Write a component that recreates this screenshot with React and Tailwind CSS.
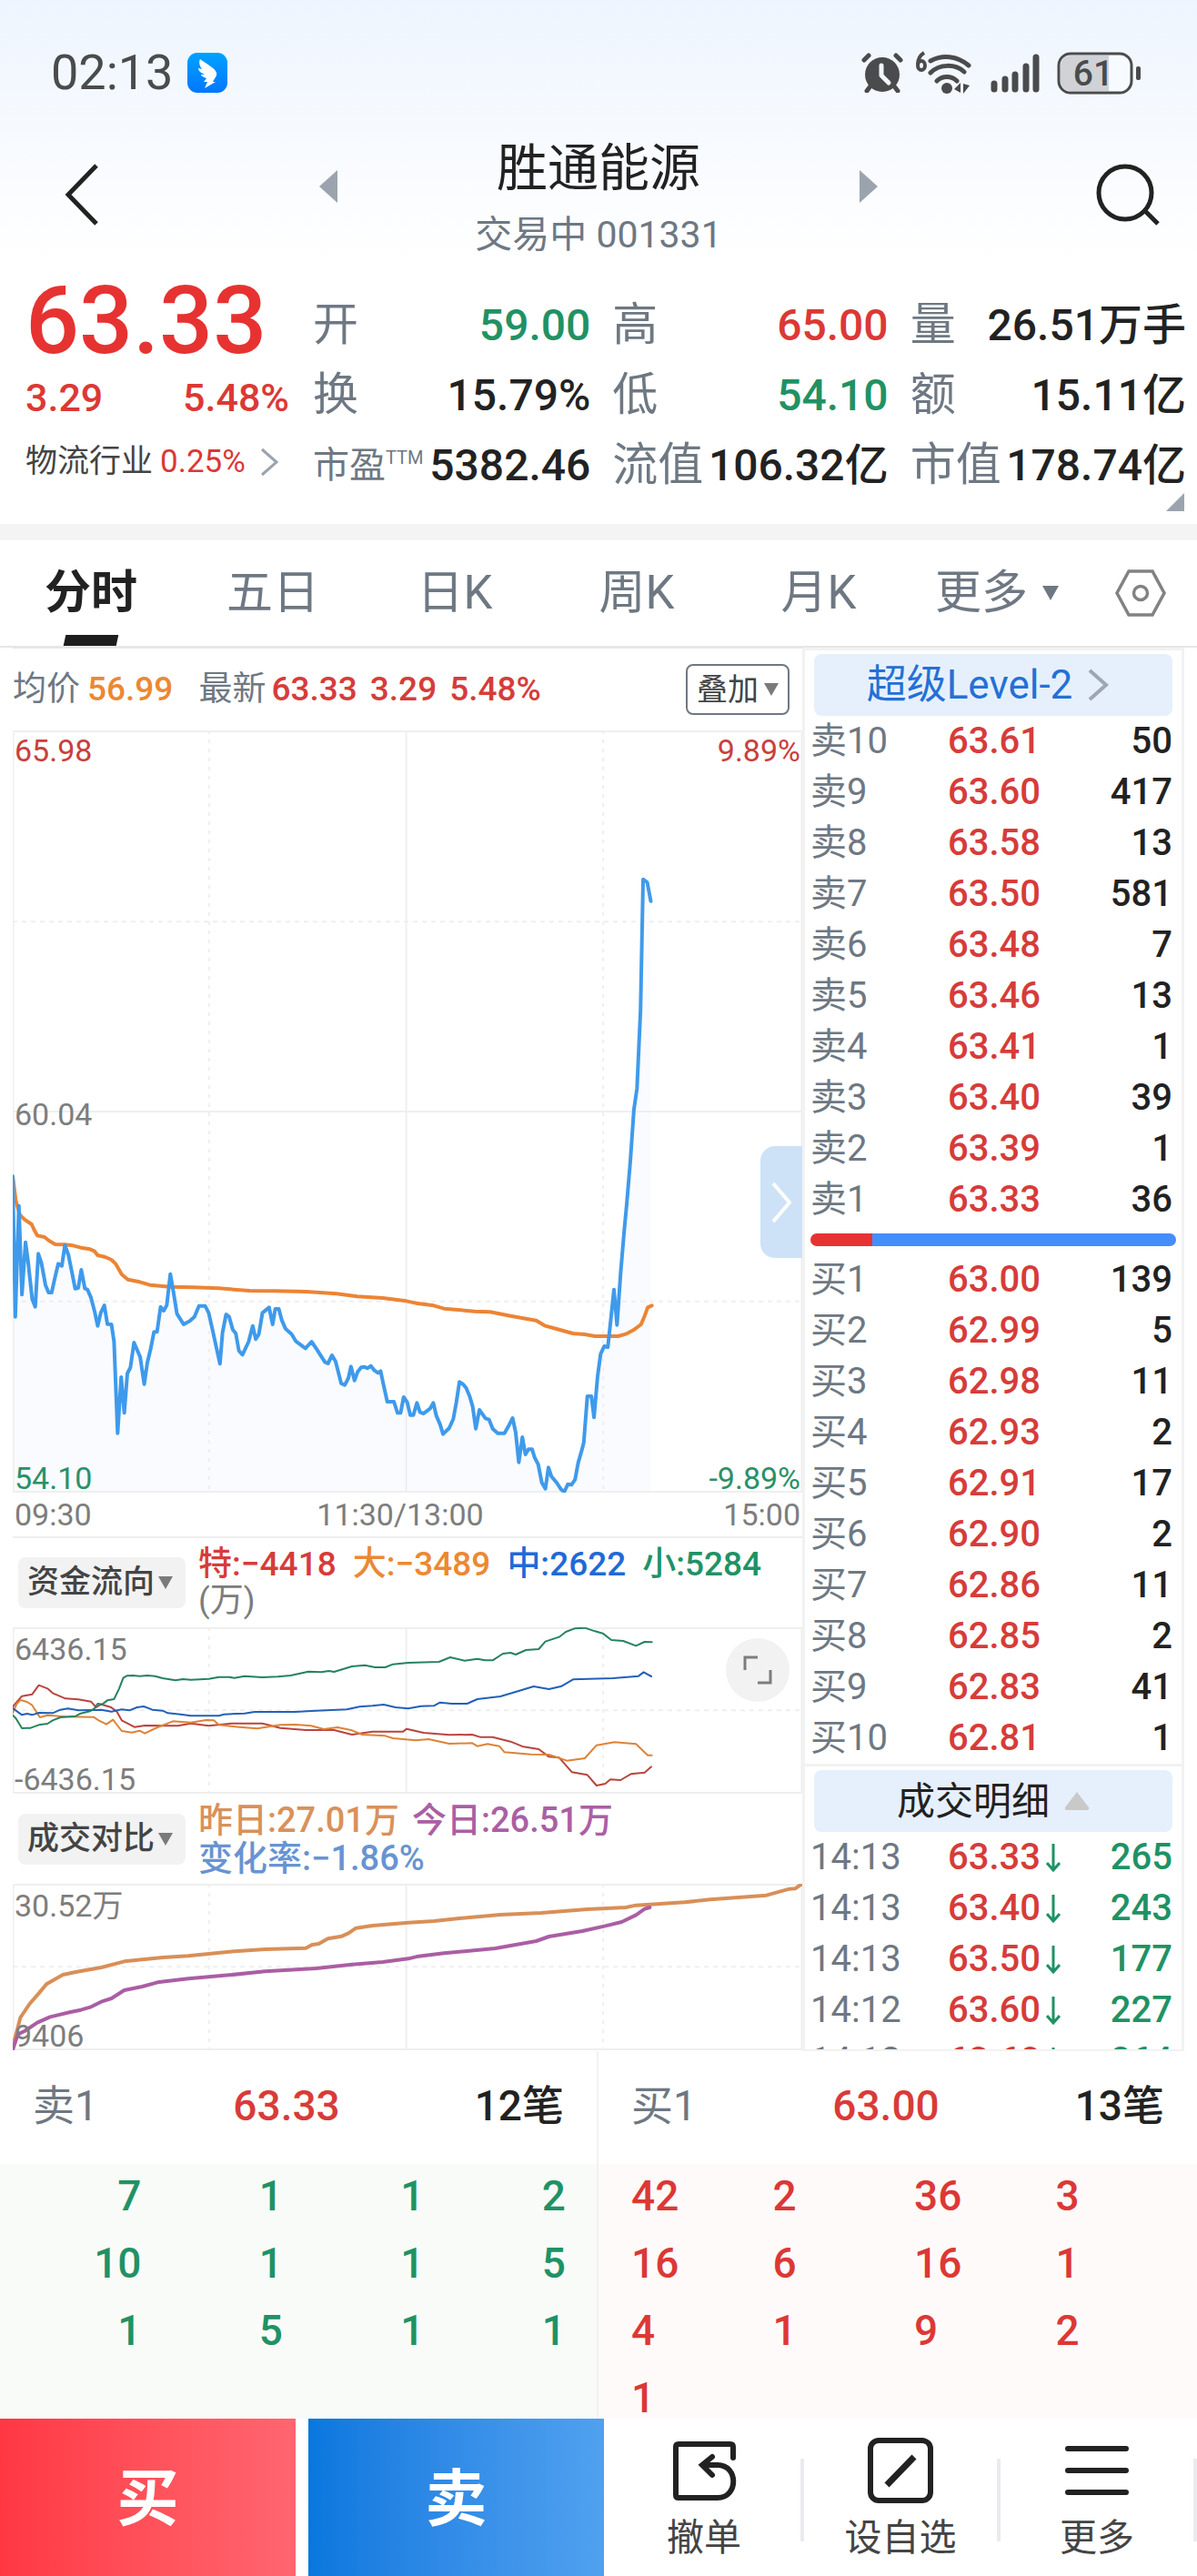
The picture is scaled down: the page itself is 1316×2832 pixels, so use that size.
import React, { useState } from 'react';

const quoteColumns = [
  [
    { label: '开', value: '59.00', tone: 'text-[#1f9265]' },
    { label: '换', value: '15.79%', tone: 'text-[#222]' },
    { label: '市盈', note: 'TTM', value: '5382.46', tone: 'text-[#222]' },
  ],
  [
    { label: '高', value: '65.00', tone: 'text-[#dc3835]' },
    { label: '低', value: '54.10', tone: 'text-[#1f9265]' },
    { label: '流值', value: '106.32亿', tone: 'text-[#222]' },
  ],
  [
    { label: '量', value: '26.51万手', tone: 'text-[#222]' },
    { label: '额', value: '15.11亿', tone: 'text-[#222]' },
    { label: '市值', value: '178.74亿', tone: 'text-[#222]' },
  ],
];

const tabs = ['分时', '五日', '日K', '周K', '月K'];

const asks = [
  ['卖10', '63.61', 50],
  ['卖9', '63.60', 417],
  ['卖8', '63.58', 13],
  ['卖7', '63.50', 581],
  ['卖6', '63.48', 7],
  ['卖5', '63.46', 13],
  ['卖4', '63.41', 1],
  ['卖3', '63.40', 39],
  ['卖2', '63.39', 1],
  ['卖1', '63.33', 36],
];

const bids = [
  ['买1', '63.00', 139],
  ['买2', '62.99', 5],
  ['买3', '62.98', 11],
  ['买4', '62.93', 2],
  ['买5', '62.91', 17],
  ['买6', '62.90', 2],
  ['买7', '62.86', 11],
  ['买8', '62.85', 2],
  ['买9', '62.83', 41],
  ['买10', '62.81', 1],
];

const trades = [
  ['14:13', '63.33', 265],
  ['14:13', '63.40', 243],
  ['14:13', '63.50', 177],
  ['14:12', '63.60', 227],
  ['14:12', '63.60', 264],
];

const sellQueue = [
  [7, 1, 1, 2],
  [10, 1, 1, 5],
  [1, 5, 1, 1],
];

const buyQueue = [
  [42, 2, 36, 3],
  [16, 6, 16, 1],
  [4, 1, 9, 2],
  [1, '', '', ''],
];

// Chart series, in viewBox units
const pricePoints =
  '27,220 32,683 39,317 45,610 52,437 57,500 65,625 71,650 77,475 83,505 91,578 97,603 103,603 110,550 116,508 123,515 129,447 136,480 149,590 155,588 161,528 168,590 173,593 180,620 187,665 193,713 199,670 206,645 212,707 220,708 225,765 232,1067 239,882 245,1000 251,870 257,850 264,768 276,815 284,905 290,835 297,785 303,733 309,733 316,650 322,663 328,645 335,542 341,600 348,673 361,708 373,697 382,683 391,647 403,647 410,670 418,730 432,838 437,735 444,675 450,683 457,725 463,738 469,795 476,808 488,765 496,713 502,757 508,740 515,670 528,652 535,708 540,657 547,657 553,695 560,722 572,740 580,763 599,787 611,765 620,787 637,832 643,837 651,810 658,830 669,903 676,908 683,885 688,847 695,893 701,865 708,850 715,848 720,853 727,845 734,860 741,868 746,862 752,910 759,963 772,963 779,1000 785,1000 791,948 798,965 804,1007 810,1007 817,967 823,998 830,1002 843,985 849,967 855,1010 862,1037 868,1070 880,1050 888,1020 894,965 900,898 907,905 913,917 920,945 926,980 932,1052 939,990 951,1018 958,1022 965,1052 975,1067 988,1067 997,1040 1004,1017 1010,1065 1016,1163 1023,1080 1029,1137 1035,1120 1042,1120 1047,1147 1054,1170 1061,1230 1068,1250 1074,1180 1080,1210 1090,1230 1099,1253 1105,1260 1112,1235 1119,1237 1126,1220 1132,1165 1138,1130 1143,1098 1150,945 1158,945 1163,1015 1170,880 1176,805 1183,780 1190,783 1196,690 1202,593 1208,710 1215,540 1222,400 1227,310 1234,170 1241,0 1247,-70 1254,-330 1259,-760 1267,-750 1274,-688';
const averagePoints =
  '27,220 33,300 41,347 50,362 64,378 70,400 75,415 89,420 98,432 110,444 129,445 145,448 160,455 178,460 187,467 193,480 208,486 220,495 228,508 240,543 252,560 275,568 295,578 335,584 380,586 430,589 490,597 540,598 600,600 660,607 700,616 750,621 796,631 815,638 850,646 870,656 930,665 960,667 1000,680 1050,695 1068,713 1090,723 1122,738 1145,741 1165,747 1210,747 1225,740 1240,727 1255,708 1262,680 1268,652 1276,646';

const fundSeries = [
  {
    color: '#b8453f',
    points:
      '27,620 45,585 65,579 78,549 95,560 105,575 130,593 155,596 180,603 190,622 200,612 218,621 230,635 240,665 265,687 285,682 350,683 375,675 410,683 455,675 515,675 550,690 600,697 655,697 690,712 730,702 790,702 797,693 830,706 880,713 925,712 940,720 965,720 1000,735 1025,752 1055,760 1075,785 1095,788 1120,836 1150,845 1168,880 1185,874 1195,860 1215,862 1235,842 1262,837 1275,818',
  },
  {
    color: '#de8336',
    points:
      '27,640 35,610 42,598 55,604 65,615 80,655 95,648 130,653 185,654 195,665 210,678 223,663 240,700 260,705 275,699 285,708 310,688 340,668 375,672 405,664 420,665 430,680 470,687 505,692 550,680 580,679 610,683 635,694 662,688 690,698 710,712 755,716 770,724 815,731 840,727 880,742 925,740 935,750 955,743 978,750 988,770 1040,777 1075,778 1110,798 1145,790 1168,747 1203,737 1245,743 1268,780 1276,780',
  },
  {
    color: '#2360b8',
    points:
      '27,625 45,647 55,643 65,647 78,640 105,641 120,630 135,626 155,632 185,631 200,630 220,636 240,629 255,632 270,622 283,619 300,630 320,633 330,641 355,645 375,650 430,650 440,645 480,642 500,637 580,637 610,634 680,629 705,620 730,617 752,613 775,622 800,626 825,618 850,617 862,606 885,610 915,610 935,595 980,586 1010,571 1045,553 1075,562 1100,552 1122,530 1200,526 1250,519 1260,506 1275,520',
  },
  {
    color: '#25835f',
    points:
      '27,648 33,658 45,691 55,690 62,690 78,680 95,676 105,665 120,655 150,651 160,642 178,635 187,625 193,610 202,612 212,599 225,595 235,560 243,525 250,518 262,517 275,519 290,517 305,519 320,526 345,533 360,529 375,531 410,528 430,522 450,522 460,525 480,519 515,523 545,521 570,517 605,504 630,506 645,502 655,505 690,487 715,483 735,490 755,490 770,480 800,475 860,472 882,457 910,468 935,462 950,467 965,467 985,445 1000,442 1010,448 1030,433 1055,430 1068,405 1095,390 1108,373 1125,362 1145,360 1165,371 1180,378 1197,400 1220,403 1245,419 1262,406 1276,407',
  },
];

const volumeSeries = [
  {
    color: '#d98f57',
    points:
      '27,840 35,790 42,745 60,700 78,665 93,635 125,604 150,595 200,580 245,560 320,547 370,542 450,528 520,520 600,516 612,505 625,502 643,485 670,477 683,467 698,450 730,442 800,432 850,427 900,418 980,406 1060,400 1150,388 1225,382 1245,375 1340,365 1390,356 1500,342 1545,321 1556,320 1566,308 1570,306',
  },
  {
    color: '#aa5ea3',
    points:
      '27,852 37,800 50,790 75,762 100,743 140,727 160,720 180,710 200,693 220,682 245,655 280,643 310,629 370,617 450,605 520,593 620,583 690,570 750,562 800,551 820,543 870,533 970,517 1050,493 1075,478 1140,460 1185,443 1217,430 1245,407 1262,387 1272,382',
  },
];

const Line = ({ points, color, width }) => (
  <polyline
    points={points}
    fill="none"
    stroke={color}
    strokeWidth={width}
    strokeLinejoin="round"
    strokeLinecap="round"
    vectorEffect="non-scaling-stroke"
  />
);

// Frame plus quarter lines. Solid in the middle, dashed elsewhere.
const ChartGrid = ({ top, height, rows }) => {
  const bottom = top + height;
  return (
    <g stroke="#efefef" strokeWidth="2">
      {[28, 796, 1569].map((x) => (
        <line key={x} x1={x} x2={x} y1={top} y2={bottom} vectorEffect="non-scaling-stroke" />
      ))}
      {[411, 1181].map((x) => (
        <line key={x} x1={x} x2={x} y1={top} y2={bottom} strokeDasharray="4 6" vectorEffect="non-scaling-stroke" />
      ))}
      {rows.map(([y, dashed]) => (
        <line key={y} x1="27" x2="1570" y1={y} y2={y} strokeDasharray={dashed ? '5 5' : undefined} vectorEffect="non-scaling-stroke" />
      ))}
    </g>
  );
};

const StatusBar = () => (
  <div className="flex h-12 items-center justify-between pl-14 pr-[62px] text-[#4a4b4c]">
    <div className="flex items-center gap-4">
      <span className="text-[54px] leading-12">02:13</span>
      <svg className="h-11 w-11" viewBox="0 0 44 44">
        <defs>
          <linearGradient id="wing" x1="0" y1="0" x2="0" y2="1">
            <stop offset="0" stopColor="#00a2ff" />
            <stop offset="1" stopColor="#0077ff" />
          </linearGradient>
        </defs>
        <rect width="44" height="44" rx="11" fill="url(#wing)" />
        <path d="M14 7c6 5 16 9 18 15 1 3-2 6-4 10h3L19 39l3-7h-4l3-4c-4-1-6-3-6-4l4 0c-4-2-7-4-7-7l4 1c-2-3-4-7-2-11z" fill="#fff" />
      </svg>
    </div>
    <div className="flex items-center">
      <svg className="h-11 w-12" viewBox="0 0 48 44" fill="none" stroke="currentColor" strokeLinecap="round">
        <circle cx="24" cy="24" r="19" fill="currentColor" stroke="none" />
        <path d="M4 8l5-5M44 8l-5-5M10 38l-3 4M38 38l3 4" strokeWidth="5" />
        <path d="M23 14v11l8 8" stroke="#f2f6fd" strokeWidth="5" strokeLinejoin="round" />
      </svg>
      <svg className="ml-3 h-12 w-[62px]" viewBox="0 0 62 48" fill="none" stroke="currentColor" strokeWidth="5">
        <path d="M10 2C5 5 3 9 3 15" strokeWidth="4" />
        <ellipse cx="7" cy="16" rx="4" ry="5" strokeWidth="4" />
        <path d="M17 11c13-7 29-6 42 5M17 24c10-10 27-10 37-1M24 33c6-6 16-6 22 0" strokeLinecap="round" />
        <circle cx="35" cy="41" r="6" fill="currentColor" stroke="none" />
        <path d="M43 42l7-7v11zM53 36v11l7-9z" fill="currentColor" stroke="none" />
      </svg>
      <svg className="ml-5 h-12 w-[58px]" viewBox="0 0 58 48" stroke="currentColor" strokeWidth="7" strokeLinecap="round">
        <path d="M5 36v6M17 31v11M28 26v16M40 17v25M51 7v35" />
      </svg>
      <svg className="ml-4 h-12 w-[92px]" viewBox="0 0 92 48">
        <rect x="2" y="3" width="80" height="43" rx="13" fill="#f7fafe" stroke="currentColor" strokeWidth="3" />
        <path d="M15 5h42v39H15A11 11 0 0 1 4 33V16A11 11 0 0 1 15 5z" fill="#d0d2d5" />
        <rect x="87" y="17" width="5" height="15" rx="2" fill="currentColor" />
        <text x="40" y="38" textAnchor="middle" fontSize="39" fontWeight="500" fill="currentColor">61</text>
      </svg>
    </div>
  </div>
);

const TitleBar = () => (
  <div className="mt-[45px] grid grid-cols-[1fr_614px_1fr] items-center">
    <button aria-label="返回" className="mb-2 ml-[72px] justify-self-start">
      <svg className="h-[68px] w-9" viewBox="0 0 36 68" fill="none" stroke="#222" strokeWidth="5">
        <path d="M34 2L3 34l31 32" />
      </svg>
    </button>
    <div className="flex items-start justify-between">
      <button aria-label="上一只" className="flex h-28 items-center">
        <svg className="h-9 w-5" viewBox="0 0 20 36"><path d="M20 0v36L0 18z" fill="#9ba4ae" /></svg>
      </button>
      <div className="text-center">
        <h1 className="text-[56px] leading-[72px] text-[#222]">胜通能源</h1>
        <p className="mt-2 text-[41px] leading-[58px] text-[#6e7883]">交易中 001331</p>
      </div>
      <button aria-label="下一只" className="flex h-28 items-center">
        <svg className="h-9 w-5" viewBox="0 0 20 36"><path d="M0 0v36l20-18z" fill="#9ba4ae" /></svg>
      </button>
    </div>
    <button aria-label="搜索" className="mb-2 mr-10 justify-self-end">
      <svg className="h-[70px] w-[72px]" viewBox="0 0 72 70" fill="none" stroke="#222" strokeWidth="5">
        <circle cx="33" cy="33" r="29" />
        <path d="M55 53l14 14" />
      </svg>
    </button>
  </div>
);

const QuoteSummary = () => (
  <div className="relative flex gap-[26px] pb-[26px] pl-7 pr-3 pt-6">
    <div className="w-[290px] shrink-0 text-[#dc3835]">
      <div className="text-[104px] font-medium leading-[84px] text-[#e63331]">63.33</div>
      <div className="flex justify-between text-[43px] font-medium leading-[84px]">
        <span>3.29</span>
        <span>5.48%</span>
      </div>
      <a href="#industry" className="flex items-center text-[35px] leading-[58px]">
        <span className="text-[#444]">物流行业</span>
        <span className="ml-2">0.25%</span>
        <svg className="ml-4 h-8 w-5" viewBox="0 0 20 32" fill="none" stroke="#9ba4ae" strokeWidth="3">
          <path d="M2 2l16 14L2 30" />
        </svg>
      </a>
    </div>
    <div className="mt-2 grid flex-1 grid-cols-[306fr_304fr_304fr] gap-6 leading-[77px]">
      {quoteColumns.map((column, index) => (
        <dl key={index}>
          {column.map((item) => (
            <div key={item.label} className="flex justify-between whitespace-nowrap">
              {item.note ? (
                <dt className="flex text-[40px] text-[#6e7883]">
                  {item.label}
                  <span className="text-[20px] leading-[60px]">{item.note}</span>
                </dt>
              ) : (
                <dt className="text-[50px] text-[#6e7883]">{item.label}</dt>
              )}
              <dd className={`text-[48px] font-medium ${item.tone}`}>{item.value}</dd>
            </div>
          ))}
        </dl>
      ))}
    </div>
    <svg className="absolute bottom-3.5 right-3.5 h-5 w-5" viewBox="0 0 20 20"><path d="M20 0v20H0z" fill="#9ba4ae" /></svg>
  </div>
);

const PeriodTabs = ({ active, setActive }) => (
  <div className="flex h-[118px] border-b-2 border-[#e6e6e6] text-[51px] text-[#6e7883]">
    {tabs.map((tab) => (
      <button
        key={tab}
        onClick={() => setActive(tab)}
        className={tab === active ? 'relative flex-[200] font-bold text-[#222]' : 'relative flex-[200]'}
      >
        {tab}
        {tab === active && (
          <span className="absolute bottom-0 left-1/2 h-3 w-[58px] -translate-x-1/2 -skew-x-12 bg-[#1d1d1d]" />
        )}
      </button>
    ))}
    <button className="flex flex-[192] items-center justify-center gap-4">
      更多
      <svg className="h-4 w-[18px]" viewBox="0 0 18 16"><path d="M0 0h18L9 16z" fill="#6e7883" /></svg>
    </button>
    <button aria-label="设置" className="flex flex-[124] items-center justify-center">
      <svg className="h-[52px] w-14" viewBox="0 0 56 52" fill="none" stroke="#828282" strokeWidth="3.500">
        <path d="M15 2h26l13 24-13 24H15L2 26z" />
        <circle cx="28" cy="26" r="7.500" />
      </svg>
    </button>
  </div>
);

const DownArrow = () => (
  <svg className="h-3.5 w-4" viewBox="0 0 16 14"><path d="M0 0h16L8 14z" fill="#7a7a7a" /></svg>
);

const IndicatorButton = ({ children }) => (
  <button className="flex h-14 w-[184px] shrink-0 items-center justify-center gap-1 rounded-lg bg-[#f2f2f2] pr-1 text-[35px] text-[#444]">
    {children}
    <DownArrow />
  </button>
);

const ChartColumn = () => (
  <div className="min-w-0 flex-1 pl-3.5">
    <div className="flex h-[91px] items-center border-t border-[#e6e6e6] pr-3.5 text-[37px] text-[#d63c3a]">
      <span className="text-[#6e7883]">均价</span>
      <span className="ml-2 font-medium text-[#ec8833]">56.99</span>
      <span className="ml-7 text-[#6e7883]">最新</span>
      <span className="ml-1.5 font-medium">63.33</span>
      <span className="ml-3.5 font-medium">3.29</span>
      <span className="ml-3.5 font-medium">5.48%</span>
      <button className="ml-auto flex h-14 w-[114px] items-center justify-center gap-1.5 rounded-lg border-2 border-[#6e7883] text-[34px] text-[#444]">
        叠加
        <DownArrow />
      </button>
    </div>

    <div className="relative text-[34px] leading-10">
      <svg className="h-[838px] w-full" viewBox="27 -1251 1543 2514" preserveAspectRatio="none">
        <polygon points={`27,1263 ${pricePoints} 1274,1263`} fill="#f9fbff" />
        <ChartGrid top={-1251} height={2514} rows={[[-1248, false], [-620, true], [6, false], [632, true], [1260, false]]} />
        <Line points={averagePoints} color="#ec8435" width="4" />
        <Line points={pricePoints} color="#3f9aeb" width="4" />
      </svg>
      <span className="absolute left-0.5 top-0.5 text-[#c8403d]">65.98</span>
      <span className="absolute right-0.5 top-0.5 text-[#c8403d]">9.89%</span>
      <span className="absolute left-0.5 top-[402px] text-[#7d7d7d]">60.04</span>
      <span className="absolute -bottom-1 left-0.5 text-[#2a9068]">54.10</span>
      <span className="absolute -bottom-1 right-0.5 text-[#2a9068]">-9.89%</span>
      <button aria-label="收起盘口" className="absolute right-0 top-[457px] flex h-[123px] w-[46px] items-center justify-center rounded-l-2xl bg-[#cde2f7]">
        <svg className="h-12 w-6" viewBox="0 0 24 48" fill="none" stroke="#fff" strokeWidth="4">
          <path d="M3 3l18 21L3 45" />
        </svg>
      </button>
    </div>
    <div className="flex h-[50px] items-center justify-between border-b-2 border-[#eee] px-0.5 text-[34px] text-[#7d7d7d]">
      <span>09:30</span>
      <span className="pr-4">11:30/13:00</span>
      <span>15:00</span>
    </div>

    <div className="flex h-[98px] items-center gap-3.5 pl-1.5 text-[37px] font-medium leading-10">
      <IndicatorButton>资金流向</IndicatorButton>
      <p className="flex flex-wrap gap-x-[18px] whitespace-nowrap">
        <span className="text-[#d63c3a]">特:−4418</span>
        <span className="text-[#ec8833]">大:−3489</span>
        <span className="text-[#1f6ad6]">中:2622</span>
        <span className="text-[#1f9265]">小:5284</span>
        <span className="basis-full font-normal text-[#7d7d7d]">(万)</span>
      </p>
    </div>
    <div className="relative text-[34px] leading-10 text-[#7d7d7d]">
      <svg className="h-[183px] w-full" viewBox="27 358 1543 549" preserveAspectRatio="none">
        <ChartGrid top={358} height={549} rows={[[361, false], [632, true], [904, false]]} />
        {fundSeries.map((s) => (
          <Line key={s.color} points={s.points} color={s.color} width="2" />
        ))}
      </svg>
      <span className="absolute left-0.5 top-1">6436.15</span>
      <span className="absolute -bottom-1 left-0.5">-6436.15</span>
      <button aria-label="全屏" className="absolute right-3.5 top-3 flex h-[70px] w-[70px] items-center justify-center rounded-full bg-[#f2f2f2]">
        <svg className="h-8 w-8" viewBox="0 0 32 32" fill="none" stroke="#7d7d7d" strokeWidth="3">
          <path d="M2 16V2h14M30 16v14H16" />
        </svg>
      </button>
    </div>

    <div className="flex h-[99px] items-center gap-3.5 pl-1.5 text-[38px] font-medium leading-[42px]">
      <IndicatorButton>成交对比</IndicatorButton>
      <p className="flex flex-wrap gap-x-3.5 whitespace-nowrap">
        <span className="text-[#d9915a]">昨日:27.01万</span>
        <span className="text-[#ab5fa4]">今日:26.51万</span>
        <span className="basis-full text-[#6893d2]">变化率:−1.86%</span>
      </p>
    </div>
    <div className="relative text-[34px] leading-10 text-[#7d7d7d]">
      <svg className="h-[183px] w-full" viewBox="27 304 1543 549" preserveAspectRatio="none">
        <ChartGrid top={304} height={549} rows={[[307, false], [578, true], [850, false]]} />
        {volumeSeries.map((s) => (
          <Line key={s.color} points={s.points} color={s.color} width="4" />
        ))}
      </svg>
      <span className="absolute left-0.5 top-1">30.52万</span>
      <span className="absolute -bottom-1 left-0.5">9406</span>
    </div>
  </div>
);

const DepthTable = ({ label, rows }) => (
  <table aria-label={label} className="w-full table-fixed text-[40px] leading-[56px]">
    <tbody>
      {rows.map(([name, price, amount]) => (
        <tr key={name}>
          <td className="w-[151px] p-0 text-[#6e7883]">{name}</td>
          <td className="p-0 font-medium text-[#d63c3a]">{price}</td>
          <td className="w-[120px] p-0 text-right font-medium text-[#222]">{amount}</td>
        </tr>
      ))}
    </tbody>
  </table>
);

const OrderBook = () => (
  <div className="w-[420px] shrink-0 border-x-3 border-t-3 border-[#f2f2f2]">
    <div className="px-2.5">
      <button className="mt-1 flex h-[68px] w-full items-center justify-center gap-4 rounded-lg bg-[#e6f0fc] pr-3 text-[44px] text-[#2470d6]">
        超级Level-2
        <svg className="h-9 w-6" viewBox="0 0 24 36" fill="none" stroke="#9ea6ae" strokeWidth="4">
          <path d="M3 2l18 16L3 34" />
        </svg>
      </button>
    </div>
    <div className="pl-1.5 pr-2.5">
      <DepthTable label="卖盘" rows={asks} />
    </div>
    <div className="mx-1.5 my-[9px] flex h-3.5 overflow-hidden rounded-full">
      <div className="bg-[#e63331]" style={{ width: '17%' }} />
      <div className="flex-1 bg-[#458dfb]" />
    </div>
    <div className="pl-1.5 pr-2.5">
      <DepthTable label="买盘" rows={bids} />
    </div>
    <div className="border-t-3 border-[#f2f2f2] px-2.5 pt-1">
      <button className="flex h-[68px] w-full items-center justify-center gap-4 rounded-lg bg-[#e6f0fc] text-[42px] text-[#222]">
        成交明细
        <svg className="h-5 w-7" viewBox="0 0 28 20"><path d="M14 0l13 17q1 3-2 3H3q-3 0-2-3z" fill="#c9c9c9" /></svg>
      </button>
    </div>
    <div className="h-[241px] overflow-hidden border-b-2 border-[#f2f2f2] pl-1.5 pr-2.5">
      <table aria-label="成交明细" className="w-full table-fixed text-[40px] leading-[56px]">
        <tbody>
          {trades.map(([time, price, amount], index) => (
            <tr key={index}>
              <td className="w-[151px] p-0 text-[#6e7883]">{time}</td>
              <td className="p-0 font-medium text-[#d63c3a]">
                <div className="flex items-center gap-1.5">
                  {price}
                  <svg className="h-8 w-4" viewBox="0 0 16 32" fill="none" stroke="#1f9265" strokeWidth="3">
                    <path d="M8 1v28M1 22l7 8 7-8" />
                  </svg>
                </div>
              </td>
              <td className="w-[120px] p-0 text-right font-medium text-[#1f9265]">{amount}</td>
            </tr>
          ))}
        </tbody>
      </table>
    </div>
  </div>
);

const QueuePanel = ({ name, price, count, rows, side }) => (
  <section className={side === 'sell' ? 'flex flex-1 flex-col border-r-2 border-[#f2f2f2]' : 'flex flex-1 flex-col'}>
    <div className="grid h-[124px] grid-cols-[192fr_176fr_218fr] items-center px-9 pb-1 text-[46px] font-medium">
      <span className="font-normal text-[#6e7883]">{name}</span>
      <span className="text-center text-[#d93b38]">{price}</span>
      <span className="text-right text-[#222]">{count}</span>
    </div>
    <div className={side === 'sell' ? 'h-[280px] bg-[#f9fbf8]' : 'h-[280px] bg-[#fffafa]'}>
      <table
        aria-label={name}
        className={
          side === 'sell'
            ? 'w-[622px] table-fixed text-right text-[46px] font-medium text-[#1f9265]'
            : 'ml-9 w-[622px] table-fixed text-left text-[46px] font-medium text-[#dc3835]'
        }
      >
        <tbody>
          {rows.map((row, index) => (
            <tr key={index} className="h-[74px] align-top">
              {row.map((cell, i) => (
                <td key={i} className="p-0 leading-[70px]">{cell}</td>
              ))}
            </tr>
          ))}
        </tbody>
      </table>
    </div>
  </section>
);

const BottomBar = () => (
  <div className="relative flex h-[173px] bg-white text-[41px] text-[#444]">
    <button className="mr-3.5 flex-[325] bg-linear-to-r from-[#ff3743] to-[#ff6570] pt-1 text-[68px] font-bold text-white">买</button>
    <button className="flex-[325] bg-linear-to-r from-[#0777de] to-[#50a1ef] pt-1 text-[68px] font-bold text-white">卖</button>
    <div className="flex flex-[648] items-center pl-1 pt-1.5">
      <button className="flex flex-1 flex-col items-center">
        <svg className="h-[74px] w-[74px]" viewBox="0 0 74 74" fill="none" stroke="#222" strokeWidth="6" strokeLinecap="round">
          <path d="M69 23V11q0-3-3-3H9q-3 0-3 3v53q0 3 3 3h43c23 0 23-36 0-36H37" strokeLinejoin="round" />
          <path d="M46 22L35 31l11 11" />
        </svg>
        <span className="mt-2 leading-[58px]">撤单</span>
      </button>
      <div className="h-[91px] w-1 bg-[#e9ebee]" />
      <button className="flex flex-1 flex-col items-center">
        <svg className="h-[74px] w-[74px]" viewBox="0 0 74 74" fill="none" stroke="#222" strokeWidth="6">
          <rect x="4" y="4" width="66" height="66" rx="9" />
          <path d="M22 53l30-31" strokeWidth="7" />
        </svg>
        <span className="mt-2 leading-[58px]">设自选</span>
      </button>
      <div className="h-[91px] w-1 bg-[#e9ebee]" />
      <button className="flex flex-1 flex-col items-center">
        <svg className="h-[74px] w-[74px]" viewBox="0 0 74 74" stroke="#222" strokeWidth="6" strokeLinecap="round">
          <path d="M5 13h64M5 37h64M5 61h64" />
        </svg>
        <span className="mt-2 leading-[58px]">更多</span>
      </button>
      <div className="h-[91px] w-1 bg-[#e9ebee]" />
    </div>
  </div>
);

const App = () => {
  const [active, setActive] = useState('分时');

  return (
    <main className="bg-white font-['Roboto','Noto_Sans_CJK_SC',sans-serif]">
      <header className="bg-linear-to-b from-[#eef5fe] to-white pt-14">
        <StatusBar />
        <TitleBar />
      </header>
      <QuoteSummary />
      <div className="h-[18px] bg-[#f4f4f4]" />
      <PeriodTabs active={active} setActive={setActive} />
      <div className="flex items-stretch pr-3.5">
        <ChartColumn />
        <OrderBook />
      </div>
      <div className="flex">
        <QueuePanel side="sell" name="卖1" price="63.33" count="12笔" rows={sellQueue} />
        <QueuePanel side="buy" name="买1" price="63.00" count="13笔" rows={buyQueue} />
      </div>
      <BottomBar />
    </main>
  );
};

export default App;
